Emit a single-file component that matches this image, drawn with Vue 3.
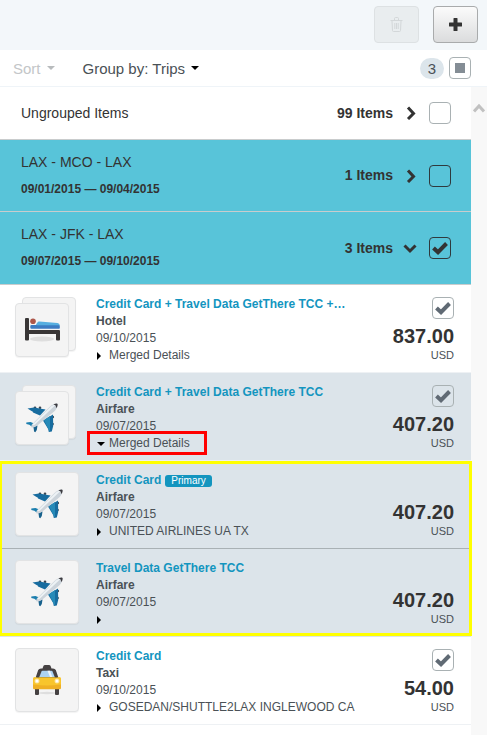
<script setup>
import { reactive } from 'vue'

const groups = reactive([
  { id: 'ungrouped', title: 'Ungrouped Items', count: 99, open: false, checked: false, trip: false },
  { id: 'mco', title: 'LAX - MCO - LAX', dates: '09/01/2015 — 09/04/2015', count: 1, open: false, checked: false, trip: true },
  { id: 'jfk', title: 'LAX - JFK - LAX', dates: '09/07/2015 — 09/10/2015', count: 3, open: true, checked: true, trip: true }
])

const sections = reactive([
  {
    id: 'hotel',
    items: [
      { id: 'hotel', icon: 'bed', stack: true, title: 'Credit Card + Travel Data GetThere TCC +…', type: 'Hotel', date: '09/10/2015', detail: 'Merged Details', amount: '837.00', selectable: true, checked: true }
    ]
  },
  {
    id: 'airfare',
    items: [
      { id: 'airfare', icon: 'plane', stack: true, shaded: true, open: true, marked: true, title: 'Credit Card + Travel Data GetThere TCC', type: 'Airfare', date: '09/07/2015', detail: 'Merged Details', amount: '407.20', selectable: true, checked: true }
    ]
  },
  {
    id: 'merged',
    outlined: true,
    items: [
      { id: 'card', icon: 'plane', shaded: true, title: 'Credit Card', primary: true, type: 'Airfare', date: '09/07/2015', detail: 'UNITED AIRLINES UA TX', amount: '407.20' },
      { id: 'travel', icon: 'plane', shaded: true, title: 'Travel Data GetThere TCC', type: 'Airfare', date: '09/07/2015', detail: '', amount: '407.20' }
    ]
  },
  {
    id: 'taxi',
    items: [
      { id: 'taxi', icon: 'taxi', title: 'Credit Card', type: 'Taxi', date: '09/10/2015', detail: 'GOSEDAN/SHUTTLE2LAX INGLEWOOD CA', amount: '54.00', selectable: true, checked: true }
    ]
  }
])
</script>

<template>
  <div class="page">
    <header class="toolbar">
      <button class="tool disabled" type="button" disabled aria-label="Delete">
        <svg width="13" height="15" viewBox="0 0 13 15" fill="none" stroke="#d3d7d9" stroke-width="1">
          <path d="M.5 3.5h12M4.5 3V1.5q0-1 1-1h2q1 0 1 1V3M2 4l.5 9.5q0 1 1 1h6q1 0 1-1L11 4M4.8 6v6M6.5 6v6M8.2 6v6" />
        </svg>
      </button>
      <button class="tool" type="button" aria-label="Add">
        <svg width="13" height="13" viewBox="0 0 13 13"><path d="M5 0h3q.5 0 .5.5v4h4q.5 0 .5.5v3q0 .5-.5.5h-4v4q0 .5-.5.5H5q-.5 0-.5-.5v-4h-4Q0 8.500 0 8V5q0-.5.5-.5h4v-4Q4.500 0 5 0z" fill="#333" /></svg>
      </button>
    </header>

    <div class="filters">
      <button class="drop sort" type="button" disabled>Sort <span class="caret"></span></button>
      <button class="drop" type="button">Group by: Trips <span class="caret"></span></button>
      <span class="badge">3</span>
      <label class="check">
        <input type="checkbox" aria-label="Select all" />
        <svg class="mark" width="10" height="10" viewBox="0 0 10 10"><path d="M0 0h10v10H0z" fill="#848d95" /></svg>
      </label>
    </div>

    <div class="body">
      <main class="list">
        <section v-for="g in groups" :key="g.id" class="group" :class="{ trip: g.trip }">
          <div class="names">
            <h2>{{ g.title }}</h2>
            <p v-if="g.dates">{{ g.dates }}</p>
          </div>
          <span class="count">{{ g.count }} Items</span>
          <button class="toggle" type="button" :aria-label="'Toggle ' + g.title" @click="g.open = !g.open">
            <svg v-if="g.open" width="14" height="14" viewBox="0 0 14 14"><path d="M1.500 4.500 7 10l5.500-5.500" /></svg>
            <svg v-else width="14" height="14" viewBox="0 0 14 14"><path d="M5 1.500 10.500 7.500l-5.500 5.500" /></svg>
          </button>
          <label class="check" :class="{ dark: g.trip }">
            <input v-model="g.checked" type="checkbox" :aria-label="'Select ' + g.title" />
            <svg v-if="g.checked" class="mark" width="16" height="14" viewBox="0 0 16 14"><path class="tick" d="M1.500 7 6 11.200 14.500 2.500" /></svg>
          </label>
        </section>

        <div v-for="s in sections" :key="s.id" class="section" :class="{ outlined: s.outlined }">
          <article v-for="item in s.items" :key="item.id" class="item" :class="{ shaded: item.shaded }">
            <div class="thumb" :class="{ stack: item.stack }">
              <span v-if="item.stack" class="sheet"></span>
              <span class="tile">
                <svg v-if="item.icon === 'bed'" width="35" height="25" viewBox="0 0 35 25">
                  <ellipse cx="17" cy="21" rx="12" ry="2.500" fill="#dedede" />
                  <path d="M0 1q0-1 1-1h2q1 0 1 1v11h30q1 0 1 1v8.500q0 1-1 1h-2q-1 0-1-1V16H4v5.500q0 1-1 1H1q-1 0-1-1z" fill="#393636" />
                  <path d="M6.500 7H34q.8 0 .8.800V10q0 .8-.8.800H6.500q-1.200 0-1.200-1.200V8q0-1 1.200-1z" fill="#3c7bc2" />
                  <path d="M11 6.600 13 3.800q.5-.5 1.300-.4L32.500 5q2 .3 2.300 2.200H12q-1 0-1-.6z" fill="#56aee0" />
                  <circle cx="8" cy="3.200" r="2.800" fill="#ad574a" />
                </svg>
                <svg v-else-if="item.icon === 'plane'" width="32" height="30" viewBox="0 0 32 30">
                  <g fill="#3b4550">
                    <circle cx="9" cy="4.800" r="1.300" /><circle cx="14" cy="4.800" r="1.300" />
                    <circle cx="26.800" cy="14" r="1.300" /><circle cx="26.500" cy="21" r="1.300" />
                  </g>
                  <path d="M1.500 5.500 8 4.600 19.500 6.500 14 12.500 7 9.500q0-1.400-1.500-1.600z" fill="#176c9f" />
                  <path d="M27 11.500 27.200 23 25.800 28.600l-3 .4-.6-3L17 17.500z" fill="#176c9f" />
                  <path d="M24 13v13.500l-.5 2-5.500-11.500z" fill="#268ab8" />
                  <path d="M.3 19.500 4.500 19l5 2-1.200 3-3-.8Q4 21.500.3 21z" fill="#1b7eae" />
                  <path d="M11.500 22.500 10.800 27l-1.500 2.200-1.200-.7-.8-5.500z" fill="#17618c" />
                  <path d="M5.500 24.500q-.8-1.800 1-3.800L24.500 3Q29 .2 31.200.7 32.400 3.500 29 7.800L12 22Q8.500 25 5.500 24.500z" fill="#cbd3da" />
                  <path d="M6.500 21.500 24.800 3.400Q28 1.400 30 1.500L9 21.500q-2 1.500-2.500 0z" fill="#edf2f5" />
                  <path d="M27.500 1.300 30.300.5q1.400 0 1.400 1.200l-.8 3-1-.5v-1.400z" fill="#3c3b40" />
                </svg>
                <svg v-else width="28" height="30" viewBox="0 0 28 30">
                  <ellipse cx="14" cy="28" rx="9" ry="1.200" fill="#dedede" />
                  <path d="M2 23h4v6q0 1-1 1H3q-1 0-1-1zM22 23h4v6q0 1-1 1h-2q-1 0-1-1z" fill="#454142" />
                  <path d="M9.500 3.500 10.500.8Q11 0 12 0h4q1 0 1.500.8L18.500 3.500h1.500q2 0 2.800 1.500L25.500 13h-23L5.200 5Q6 3.500 8 3.500z" fill="#454142" />
                  <path d="M8.500 6.500q.3-.7 1-.7h9q.7 0 1 .7L21.700 12H6.300z" fill="#acd3f2" />
                  <path d="M14.500 5.800h2.500l2.300 6.200H17z" fill="#edf5fb" />
                  <path d="M1.500 12q2.500.8 5 .2h15q2.500.6 5-.2Q28 12 28 13.500V22H0v-8.500Q0 12 1.500 12z" fill="#f8c52d" />
                  <path d="M0 19.500q14 2 28 0V23q0 1.300-1.300 1.300H1.300Q0 24.300 0 23z" fill="#efb026" />
                  <circle cx="4" cy="16" r="2.500" fill="#fce39a" /><circle cx="24" cy="16" r="2.500" fill="#fce39a" />
                  <circle cx="4" cy="16" r="1.500" fill="#fff" /><circle cx="24" cy="16" r="1.500" fill="#fff" />
                </svg>
              </span>
            </div>

            <div class="info">
              <div class="line">
                <a href="#">{{ item.title }}</a>
                <span v-if="item.primary" class="primary">Primary</span>
              </div>
              <div class="line kind">{{ item.type }}</div>
              <div class="line">{{ item.date }}</div>
              <button class="detail" :class="{ marked: item.marked }" type="button" :aria-label="item.detail || 'Details'" @click="item.open = !item.open">
                <span class="arrow"><span :class="item.open ? 'caret' : 'pointer'"></span></span>{{ item.detail }}
              </button>
            </div>

            <div class="cost">
              <label v-if="item.selectable" class="check soft">
                <input v-model="item.checked" type="checkbox" :aria-label="'Select ' + item.type" />
                <svg v-if="item.checked" class="mark" width="16" height="14" viewBox="0 0 16 14"><path class="tick" d="M1.500 7 6 11.200 14.500 2.500" /></svg>
              </label>
              <strong>{{ item.amount }}</strong>
              <span class="currency">USD</span>
            </div>
          </article>
        </div>
      </main>
      <div class="gutter">
        <svg width="12" height="10" viewBox="0 0 12 10"><path d="M1 8.500 6 3l5 5.500" fill="none" stroke="#c1c1c1" stroke-width="3" /></svg>
      </div>
    </div>
  </div>
</template>

<style>
body {
  background: #fff;
}
</style>

<style scoped>
.page {
  display: flex;
  flex-direction: column;
  min-height: 100vh;
  font-family: "Liberation Sans", Arial, sans-serif;
  font-size: 12px;
  line-height: 17px;
  color: #4a5156;
}
.page *,
.page *::after {
  box-sizing: border-box;
}
button {
  font: inherit;
  color: inherit;
  background: none;
  border: 0;
  padding: 0;
}
h2,
p {
  margin: 0;
}
.toolbar {
  display: flex;
  justify-content: flex-end;
  gap: 14px;
  height: 50px;
  padding: 6px 9px 7px;
  background: #f3f7fa;
}
.tool {
  display: flex;
  align-items: center;
  justify-content: center;
  width: 45px;
  border: 1px solid #a9abac;
  border-radius: 4px;
  background: linear-gradient(#fbfbfb, #dbdcdd);
}
.tool.disabled {
  border-color: #dde1e3;
  background: #e9edef;
}
.filters {
  display: flex;
  align-items: center;
  height: 37px;
  padding: 0 16px 0 13px;
  border-bottom: 1px solid #eff4f8;
  font-size: 15px;
}
.drop {
  display: flex;
  align-items: center;
  gap: 6px;
}
.drop.sort {
  margin-right: 28px;
  color: #c3c6c8;
}
.caret {
  border: 4px solid transparent;
  border-top-color: #000;
  border-bottom: 0;
}
.sort .caret {
  border-top-color: #b8bbbd;
}
.pointer {
  border: 4px solid transparent;
  border-left-color: #000;
  border-right: 0;
}
.badge {
  width: 24px;
  margin: 0 5px 0 auto;
  border-radius: 11px;
  background: #dce5eb;
  line-height: 21px;
  text-align: center;
}
.check {
  position: relative;
  display: block;
  flex: none;
  width: 22px;
  height: 22px;
  color: #606a74;
}
.check input {
  appearance: none;
  display: block;
  width: 100%;
  height: 100%;
  margin: 0;
  border: 1px solid #a9b1b3;
  border-radius: 4px;
}
.check.dark {
  color: #333;
}
.check.dark input {
  border-color: #2f3a3e;
}
.mark {
  position: absolute;
  inset: 0;
  margin: auto;
  pointer-events: none;
}
.tick {
  fill: none;
  stroke: currentColor;
  stroke-width: 4;
}
.body {
  display: flex;
  flex: 1;
}
.list {
  flex: 1;
  min-width: 0;
}
.gutter {
  display: flex;
  justify-content: center;
  width: 16px;
  padding-top: 16px;
  background: #f8f8f8;
}
.group {
  display: flex;
  align-items: center;
  min-height: 53px;
  padding: 0 20px 0 21px;
  border-bottom: 1px solid #c9cccd;
  color: #333;
}
.group.trip {
  min-height: 72px;
  background: #58c4d9;
}
.group.trip:nth-of-type(3) {
  min-height: 73px;
}
.names {
  flex: 1;
}
.group h2 {
  font-size: 14px;
  font-weight: 400;
}
.group p {
  margin-top: 10px;
  font-weight: 700;
}
.count {
  font-size: 14px;
  font-weight: 700;
}
.toggle {
  display: flex;
  margin: 0 12px 0 10px;
}
.toggle path {
  fill: none;
  stroke: #333;
  stroke-width: 3;
}
.section {
  position: relative;
}
.outlined::after {
  content: "";
  position: absolute;
  inset: 0 -1px 1px 0;
  border: 3px solid #ff0;
  border-left-width: 2px;
  pointer-events: none;
}
.item {
  display: flex;
  gap: 17px;
  height: 88px;
  padding: 11px 17px 0 15px;
  border-bottom: 1px solid #eef1f4;
}
.item.shaded {
  background: #dce4ea;
}
.outlined .item {
  border-bottom-color: #a9b1b5;
}
.outlined .item:last-child {
  border-bottom-color: #dce4ea;
}
.thumb {
  position: relative;
  flex: none;
  width: 64px;
  height: 64px;
}
.tile,
.sheet {
  border: 1px solid #e2e3e4;
  border-radius: 4px;
  background: #f4f4f4;
  box-shadow: 0 1px 1px rgba(0, 0, 0, 0.05);
}
.tile {
  display: flex;
  align-items: center;
  justify-content: center;
  height: 64px;
}
.sheet {
  position: absolute;
  top: 1px;
  left: 7px;
  width: 54px;
  height: 54px;
}
.stack .tile {
  position: absolute;
  top: 7px;
  left: 0;
  width: 54px;
  height: 54px;
}
.info {
  flex: 1;
  min-width: 0;
  white-space: nowrap;
}
.line {
  display: flex;
  align-items: center;
  height: 17px;
}
.line a {
  color: #1395bf;
  font-weight: 700;
  text-decoration: none;
}
.kind {
  font-weight: 700;
}
.primary {
  margin-left: 4px;
  padding: 0 6px;
  border-radius: 3px;
  background: #1395bf;
  color: #fff;
  font-size: 10px;
  line-height: 12px;
}
.detail {
  position: relative;
  display: flex;
  align-items: center;
  height: 17px;
}
.arrow {
  display: flex;
  width: 13px;
  padding-left: 1px;
}
.marked::after {
  content: "";
  position: absolute;
  inset: -4px -17px -3px -9px;
  border: 3px solid #f00;
}
.cost {
  display: flex;
  flex-direction: column;
  align-items: flex-end;
  justify-content: flex-end;
  height: 67px;
}
.cost .check {
  margin-bottom: 5px;
}
.cost strong {
  color: #333;
  font-size: 20px;
  line-height: 24px;
}
.currency {
  font-size: 11px;
  line-height: 15px;
}
</style>
